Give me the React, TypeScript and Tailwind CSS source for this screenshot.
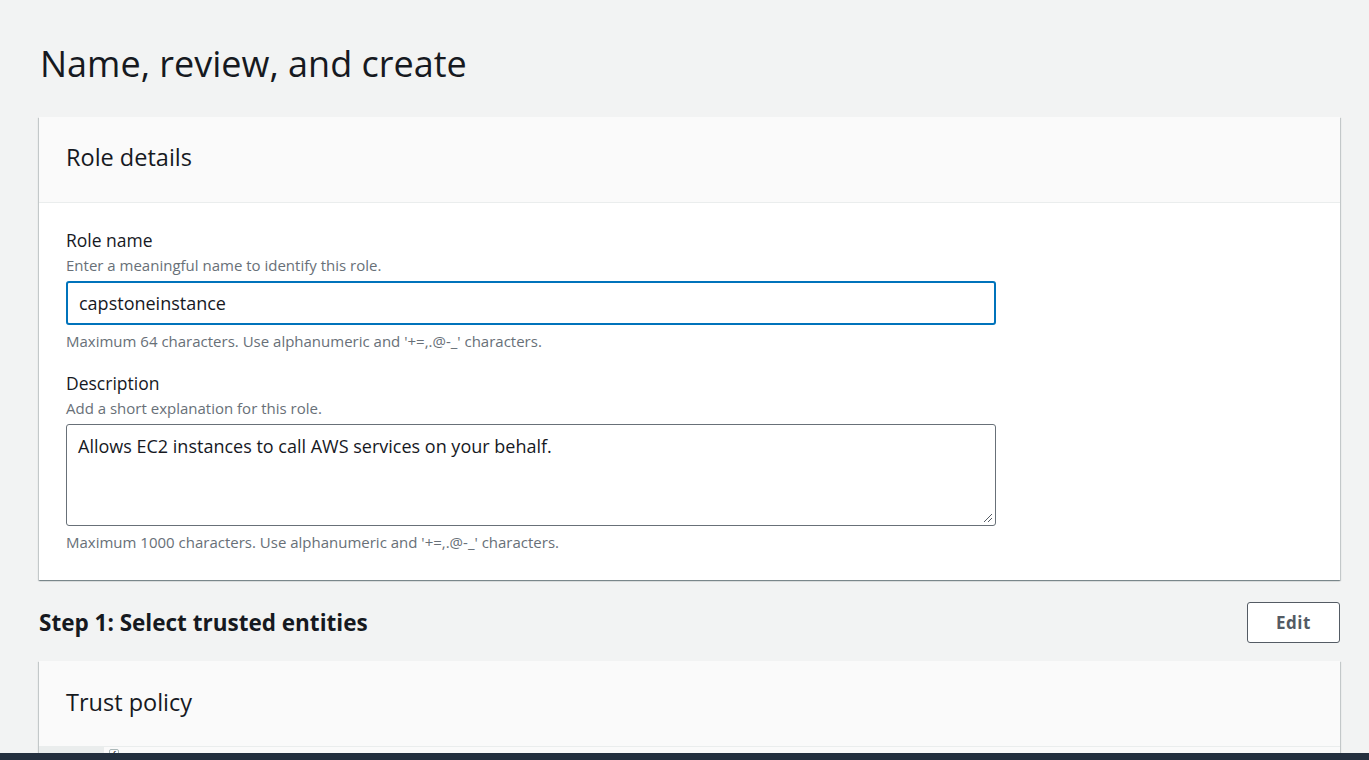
const font = { fontFamily: '"Open Sans", "Noto Sans", Arial, sans-serif' };

const cardShadow =
    'shadow-[0_1px_1px_0_rgba(0,28,36,0.3),1px_1px_1px_0_rgba(0,28,36,0.15),-1px_1px_1px_0_rgba(0,28,36,0.15)]';

const Field = (props: {
    label: string;
    hint: string;
    footer: string;
    children: React.ReactNode;
}) => (
    <div>
        <div className="text-[17.5px] leading-[24px] text-[#16191f]">{props.label}</div>
        <div className="mt-[2px] text-[15px] leading-[22px] text-[#687078]">{props.hint}</div>
        <div className="mt-[5px]">{props.children}</div>
        <div className="mt-[5px] text-[15px] leading-[22px] text-[#687078]">{props.footer}</div>
    </div>
);

export default function App() {
    return (
        <div
            className="relative h-[760px] w-full overflow-hidden bg-[#f2f3f3]"
            style={font}
        >
            <div className="pl-[39px] pr-[29px] pt-[40px]">
                <h1 className="pl-[1px] text-[36px] leading-[48px] font-normal text-[#16191f]">
                    Name, review, and create
                </h1>

                <div className={`mt-[29px] bg-white ${cardShadow}`}>
                    <div className="h-[86px] flex items-center px-[27px] pb-[5px] bg-[#fafafa] border-b border-[#eaeded]">
                        <h2 className="text-[23.5px] leading-[30px] text-[#16191f]">Role details</h2>
                    </div>
                    <div className="px-[27px] pt-[25px] pb-[27px] flex flex-col gap-[19px]">
                        <Field
                            label="Role name"
                            hint="Enter a meaningful name to identify this role."
                            footer="Maximum 64 characters. Use alphanumeric and '+=,.@-_' characters."
                        >
                            <div className="w-[930px] h-[44px] rounded-[3px] border-2 border-[#0073bb] flex items-center px-[11px] text-[18px] text-[#16191f]">
                                capstoneinstance
                            </div>
                        </Field>
                        <Field
                            label="Description"
                            hint="Add a short explanation for this role."
                            footer="Maximum 1000 characters. Use alphanumeric and '+=,.@-_' characters."
                        >
                            <div className="relative w-[930px] h-[102px] rounded-[3px] border border-[#687078] px-[11px] pt-[9px] text-[18px] leading-[24px] text-[#16191f]">
                                Allows EC2 instances to call AWS services on your behalf.
                                <svg
                                    className="absolute right-[2px] bottom-[2px]"
                                    width="12"
                                    height="12"
                                    viewBox="0 0 12 12"
                                >
                                    <path d="M11 3 L3 11 M11 7 L7 11" stroke="#545b64" strokeWidth="1" />
                                </svg>
                            </div>
                        </Field>
                    </div>
                </div>

                <div className="mt-[22px] flex items-center justify-between">
                    <h2 className="text-[22.5px] leading-[30px] font-bold text-[#16191f]">
                        Step 1: Select trusted entities
                    </h2>
                    <button
                        type="button"
                        className="w-[93px] h-[41px] rounded-[3px] border border-[#545b64] bg-white text-[17px] font-bold tracking-[0.5px] text-[#545b64]"
                    >
                        Edit
                    </button>
                </div>

                <div className={`mt-[18px] bg-white ${cardShadow}`}>
                    <div className="h-[86px] flex items-center px-[27px] pb-[4px] bg-[#fafafa] border-b border-[#eaeded]">
                        <h2 className="text-[23.5px] leading-[30px] text-[#16191f]">Trust policy</h2>
                    </div>
                    <div className="flex h-[40px] bg-[#fafafa]">
                        <div className="w-[65px] bg-[#eaeded]" />
                        <div className="ml-[5px] mt-[2px] h-[12px] px-[2px] rounded-[2px] border border-[#aab7b8] text-[11px] leading-[10px] text-[#16191f]">{'{'}</div>
                    </div>
                </div>
            </div>
            <div className="absolute bottom-0 left-0 right-0 h-[7px] bg-[#232f3e]" />
        </div>
    );
}
